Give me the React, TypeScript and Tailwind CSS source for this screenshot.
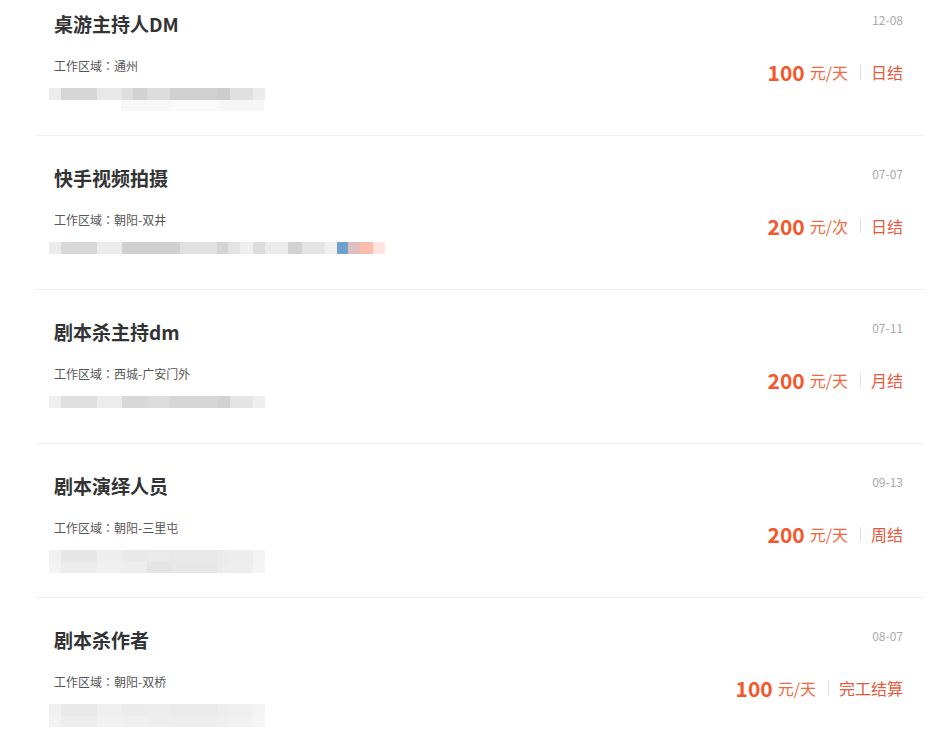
const font = { fontFamily: '"Noto Sans CJK SC", "Noto Sans", sans-serif' };

type Block = [number, string];

type Job = {
  title: string;
  date: string;
  area: string;
  price: string;
  unit: string;
  settle: string;
  mosaic: Block[];
  faint?: Block[];
};

const rowA: Block[] = [
  [12, "#ececec"], [36, "#d6d6d6"], [25, "#e8e8e8"], [11, "#dedede"], [14, "#d2d2d2"],
  [23, "#dcdcdc"], [47, "#d0d0d0"], [13, "#cdcdcd"], [23, "#e0e0e0"], [12, "#ebebeb"],
];

const jobs: Job[] = [
  {
    title: "桌游主持人DM",
    date: "12-08",
    area: "通州",
    price: "100",
    unit: "元/天",
    settle: "日结",
    mosaic: rowA,
    faint: [[72, "#ffffff"], [50, "#f7f7f7"], [48, "#fafafa"], [45, "#f6f6f6"]],
  },
  {
    title: "快手视频拍摄",
    date: "07-07",
    area: "朝阳-双井",
    price: "200",
    unit: "元/次",
    settle: "日结",
    mosaic: [
      [12, "#ebebeb"], [36, "#d8d8d8"], [25, "#ececec"], [58, "#d0d0d0"], [37, "#e0e0e0"],
      [11, "#d4d4d4"], [12, "#e4e4e4"], [13, "#efefef"], [12, "#dcdcdc"], [23, "#ececec"],
      [14, "#d2d2d2"], [23, "#e4e4e4"], [12, "#f0f0f0"], [11, "#6f9fcc"], [12, "#dcc0c0"],
      [13, "#fbbcab"], [12, "#fde4df"],
    ],
  },
  {
    title: "剧本杀主持dm",
    date: "07-11",
    area: "西城-广安门外",
    price: "200",
    unit: "元/天",
    settle: "月结",
    mosaic: [
      [12, "#efefef"], [36, "#e0e0e0"], [25, "#ececec"], [25, "#d8d8d8"], [23, "#dcdcdc"],
      [47, "#d6d6d6"], [13, "#d2d2d2"], [23, "#e4e4e4"], [12, "#eeeeee"],
    ],
  },
  {
    title: "剧本演绎人员",
    date: "09-13",
    area: "朝阳-三里屯",
    price: "200",
    unit: "元/天",
    settle: "周结",
    mosaic: [
      [12, "#f1f1f1"], [36, "#e6e6e6"], [25, "#eeeeee"], [25, "#e9e9e9"], [23, "#eaeaea"],
      [47, "#e8e8e8"], [13, "#ebebeb"], [23, "#ededed"], [12, "#f3f3f3"],
    ],
    faint: [
      [12, "#f3f3f3"], [36, "#ececec"], [25, "#f0f0f0"], [25, "#eeeeee"], [23, "#e4e4e4"],
      [47, "#e7e7e7"], [13, "#ececec"], [23, "#eeeeee"], [12, "#f4f4f4"],
    ],
  },
  {
    title: "剧本杀作者",
    date: "08-07",
    area: "朝阳-双桥",
    price: "100",
    unit: "元/天",
    settle: "完工结算",
    mosaic: [
      [12, "#f0f0f0"], [36, "#e9e9e9"], [25, "#efefef"], [25, "#ebebeb"], [23, "#ececec"],
      [47, "#eaeaea"], [13, "#ededed"], [23, "#efefef"], [12, "#f3f3f3"],
    ],
    faint: [
      [12, "#f2f2f2"], [36, "#ededed"], [25, "#f1f1f1"], [25, "#efefef"], [23, "#eeeeee"],
      [47, "#ededed"], [13, "#efefef"], [23, "#f1f1f1"], [12, "#f5f5f5"],
    ],
  },
];

function Mosaic({ blocks, faint }: { blocks: Block[]; faint?: Block[] }) {
  return (
    <div className="flex flex-col blur-[0.6px]">
      <div className="flex h-[12px]">
        {blocks.map(([w, c], i) => (
          <div key={i} className="h-full" style={{ width: w, backgroundColor: c }} />
        ))}
      </div>
      {faint && (
        <div className="flex h-[11px]">
          {faint.map(([w, c], i) => (
            <div key={i} className="h-full" style={{ width: w, backgroundColor: c }} />
          ))}
        </div>
      )}
    </div>
  );
}

function JobRow({ job, last }: { job: Job; last: boolean }) {
  return (
    <div
      className={`flex h-[154px] pl-[19px] pr-[22px] ${last ? "" : "border-b border-[#f0f0f0]"}`}
    >
      <div className="flex flex-col flex-1">
        <h3 className="mt-[30px] text-[19px] leading-[24px] font-bold text-[#333333]">{job.title}</h3>
        <p className="mt-[22px] text-[12px] leading-[16px] text-[#555555]">
          工作区域<span style={{ fontFamily: '"Noto Sans CJK TC", sans-serif' }}>：</span>
          {job.area}
        </p>
        <div className="mt-[14px] -ml-[5px]">
          <Mosaic blocks={job.mosaic} faint={job.faint} />
        </div>
      </div>
      <div className="flex flex-col items-end">
        <span className="mt-[30px] text-[12px] leading-[16px] text-[#aaaaaa]">{job.date}</span>
        <div className="mt-[32px] flex items-center">
          <span className="text-[21px] leading-[24px] font-bold text-[#f2582c]">{job.price}</span>
          <span className="ml-[5px] text-[16px] leading-[24px] text-[#ef6a40]">{job.unit}</span>
          <span className="ml-[12px] mr-[10px] h-[14px] w-px bg-[#dddddd]" />
          <span className="text-[16px] leading-[24px] text-[#e55a3c]">{job.settle}</span>
        </div>
      </div>
    </div>
  );
}

export default function App() {
  return (
    <div className="w-[939px] h-[746px] overflow-hidden bg-white" style={font}>
      <div className="-mt-[18px] ml-[35px] w-[890px]">
        {jobs.map((job, i) => (
          <JobRow key={i} job={job} last={i === jobs.length - 1} />
        ))}
      </div>
    </div>
  );
}
